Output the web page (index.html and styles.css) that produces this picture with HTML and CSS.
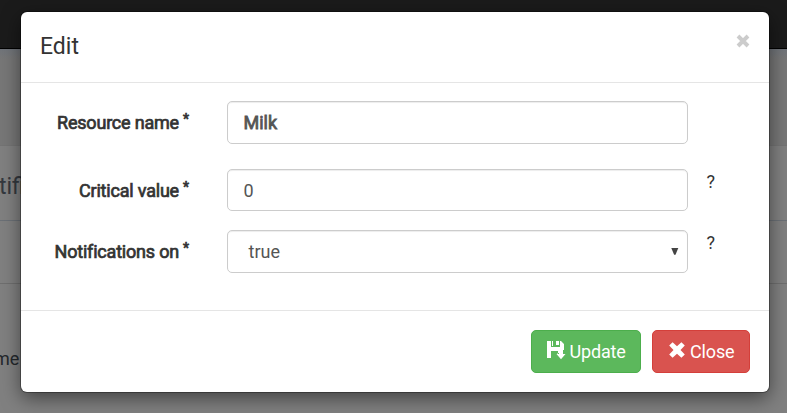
FILE: index.html
```html
<!DOCTYPE html>
<html lang="en">
<head>
<meta charset="utf-8">
<title>Edit</title>
<link rel="stylesheet" href="styles.css">
</head>
<body>
<div class="page">
  <div class="navbar"></div>
  <div class="band"></div>
  <div class="page-title"><span>tifi</span></div>
  <div class="page-row"></div>
  <div class="page-body"><span>me</span></div>
</div>
<div class="modal">
  <div class="modal-header">
    <h4>Edit</h4>
    <svg class="dismiss" viewBox="0 0 14 14"><path d="M2 2 12 12M12 2 2 12"/></svg>
  </div>
  <div class="modal-body">
    <div class="row first">
      <div class="label"><span class="name">Resource name</span><span class="star">*</span></div>
      <div class="control strong">Milk</div>
    </div>
    <div class="row second">
      <div class="label"><span class="name">Critical value</span><span class="star">*</span></div>
      <div class="control short">0</div>
      <div class="help">?</div>
    </div>
    <div class="row third">
      <div class="label"><span class="name">Notifications on</span><span class="star">*</span></div>
      <div class="control select">true<svg class="arrow" viewBox="0 0 8 7"><path d="M0.3 0H7.3L4.5 6.8H3.1Z"/></svg></div>
      <div class="help">?</div>
    </div>
  </div>
  <div class="modal-footer">
    <div class="btn update"><svg viewBox="0 0 19 19"><path fill-rule="evenodd" d="M0 0H4V6H13V0H14L17 3V9H12V12H10L11 13V10H4V17H0ZM9 0H12V4H9ZM5 0H6V5H5Z"/><path d="M12 9H16V13H18.5L14 18.2 9.5 13H12Z"/></svg><span>Update</span></div>
    <div class="btn close"><svg viewBox="0 0 16 16"><path d="M3.6.2 8 4.2 12.4.2 15.8 3.6 11.5 8 15.8 12.4 12.4 15.8 8 11.8 3.6 15.8.2 12.4 4.5 8 .2 3.6Z"/></svg><span>Close</span></div>
  </div>
</div>
</body>
</html>
```
FILE: styles.css
```css
* { box-sizing: border-box; }
body {
  margin: 0;
  width: 787px;
  height: 413px;
  overflow: hidden;
  background: #808080;
  color: #333;
  font: 18px/26px Roboto, "Liberation Sans", sans-serif;
}
.page { height: 413px; color: #24282d; }
.navbar { height: 49px; background: #1b1b1b; border-bottom: 1px solid #000; }
.band { height: 97px; background: linear-gradient(#70747a, #777 10px); border-bottom: 1px solid #747474; }
.page-title { height: 75px; padding-top: 28px; border-bottom: 1px solid #6b7076; font-size: 23px; }
.page-title span { margin-left: -1px; color: #34383e; }
.page-row { height: 63px; border-bottom: 1px solid #6f6f6f; }
.page-body { padding-top: 62px; }
.page-body span { margin-left: -6px; }
.modal {
  position: absolute;
  left: 21px;
  top: 12px;
  width: 748px;
  height: 380px;
  background: #fff;
  border-radius: 6px;
  box-shadow: 0 0 0 1px rgba(0, 0, 0, .3), 0 6px 19px rgba(0, 0, 0, .5);
}
.modal-header {
  display: flex;
  justify-content: space-between;
  height: 71px;
  padding: 19px;
  border-bottom: 1px solid #e5e5e5;
}
h4 { margin: 3px 0 0; font-size: 23px; font-weight: 400; line-height: 26px; }
.dismiss { width: 14px; height: 14px; margin-top: 3px; stroke: #ccc; stroke-width: 3.9; }
.modal-body { height: 227px; padding-top: 18px; }
.row { display: grid; grid-template-columns: 168px 461px 1fr; column-gap: 38px; }
.first { height: 68px; }
.second { height: 61px; }
.label { display: flex; justify-content: flex-end; gap: 4px; padding-top: 9px; -webkit-text-stroke: .7px #333; }
.name { white-space: nowrap; letter-spacing: -.2px; }
.star { font-size: 14px; line-height: 18px; }
.control {
  height: 43px;
  padding: 8px 15.5px;
  border: 1px solid #ccc;
  border-radius: 5px;
  box-shadow: inset 0 1px 1px rgba(0, 0, 0, .075);
  color: #555;
}
.short { height: 42px; }
.strong { -webkit-text-stroke: .8px #555; }
.select { display: flex; justify-content: space-between; padding: 8px 8px 8px 20.5px; }
.arrow { width: 8px; height: 7px; margin-top: 9px; fill: #444; }
.help { margin-left: -19.5px; }
.modal-footer {
  display: flex;
  justify-content: flex-end;
  gap: 11px;
  height: 82px;
  padding: 19px;
  border-top: 1px solid #e5e5e5;
}
.btn {
  display: flex;
  height: 43px;
  padding: 8px 15px;
  border: 1px solid;
  border-radius: 5px;
  color: #fff;
}
.btn svg { flex: none; fill: #fff; }
.btn span { letter-spacing: -.15px; }
.update { width: 110px; background: #5cb85c; border-color: #4cae4c; }
.update svg { width: 19px; height: 19px; margin: 2px 3.5px 0 0; }
.close { width: 98px; background: #d9534f; border-color: #d43f3a; }
.close svg { width: 16px; height: 16px; margin: 3px 5px 0 1px; }
```
